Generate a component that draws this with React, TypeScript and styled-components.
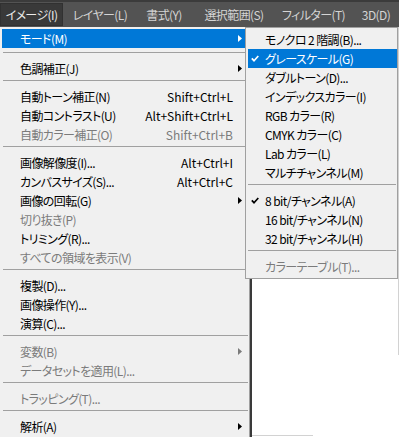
import React from 'react';
import styled, { createGlobalStyle, css } from 'styled-components';

const GlobalStyle = createGlobalStyle`
  html, body { margin: 0; padding: 0; background: #ffffff; }
  body { font-family: "Noto Sans CJK JP", "Noto Sans", sans-serif; }
`;

const FONT = `"Noto Sans CJK JP", "Noto Sans", sans-serif`;

const Screen = styled.div`
  width: 399px;
  height: 437px;
  overflow: hidden;
  display: flex;
  flex-direction: column;
  font-family: ${FONT};
  font-size: 12px;
  font-feature-settings: "palt";
`;

const MenuBar = styled.div`
  height: 27px;
  box-sizing: border-box;
  background: #535353;
  border-top: 2px solid #3b3b3b;
  padding-top: 1px;
  display: flex;
  gap: 4px;
  flex: none;
`;

const BarItem = styled.div<{ $active?: boolean; $w: number }>`
  width: ${(p) => p.$w}px;
  height: 23px;
  flex: none;
  display: flex;
  align-items: center;
  justify-content: center;
  color: #d4d4d4;
  white-space: nowrap;
  letter-spacing: -0.6px;
  ${(p) =>
    p.$active &&
    css`
      background: #393939;
      box-shadow: inset 0 0 0 1px #313131;
      color: #ececec;
    `}
`;

const Body = styled.div`
  flex: 1;
  min-height: 0;
  display: flex;
  position: relative;
`;

const Dropdown = styled.div`
  width: 250px;
  flex: none;
  box-sizing: border-box;
  background: #f0f0f0;
  border-right: 1px solid #a0a0a0;
  padding-top: 2px;
  display: flex;
  flex-direction: column;
`;

const SubMenu = styled.div`
  position: absolute;
  left: 245px;
  top: 0;
  width: 153px;
  box-sizing: border-box;
  background: #f0f0f0;
  border: 1px solid #a0a0a0;
  padding: 2px 0 2px 2px;
  display: flex;
  flex-direction: column;
`;

const Row = styled.div<{ $hl?: boolean; $disabled?: boolean; $inset: number }>`
  height: 19px;
  margin: 0 ${(p) => p.$inset}px;
  display: flex;
  align-items: center;
  white-space: nowrap;
  color: ${(p) => (p.$disabled ? '#7b7b7b' : '#000000')};
  ${(p) =>
    p.$hl &&
    css`
      background: #0078d7;
      color: #ffffff;
    `}
`;

const CheckCell = styled.div<{ $w: number }>`
  width: ${(p) => p.$w}px;
  flex: none;
  display: flex;
  align-items: center;
  padding-left: 3px;
  box-sizing: border-box;
`;

const Label = styled.span`
  flex: 1;
  letter-spacing: -0.6px;
`;

const Shortcut = styled.span`
  flex: none;
`;

const ArrowCell = styled.div`
  width: 14px;
  flex: none;
  display: flex;
  align-items: center;
  padding-left: 5px;
  box-sizing: border-box;
`;

const Sep = styled.div<{ $wide?: boolean; $sub?: boolean }>`
  height: 1px;
  flex: none;
  background: #a0a0a0;
  margin: ${(p) => (p.$wide ? 4 : 2)}px 1px 6px ${(p) => (p.$sub ? 0 : 3)}px;
`;

const DocFrame = styled.div`
  flex: 1;
  min-width: 0;
  background: #ffffff;
  border-left: 2px solid #3a3a3a;
  display: flex;
`;

const Canvas = styled.div`
  flex: 1;
  display: flex;
  flex-direction: column;
  justify-content: flex-end;
`;

const BottomRule = styled.div`
  width: 61px;
  height: 1px;
  margin-bottom: 1px;
  background: #d2d2d2;
`;

const EdgeColumn = styled.div`
  width: 1px;
  flex: none;
`;

const EdgeLine = styled.div`
  height: 328px;
  background: #d2d2d2;
`;

type ItemEntry = {
  kind: 'item';
  label: string;
  shortcut?: string;
  sub?: boolean;
  disabled?: boolean;
  hl?: boolean;
  checked?: boolean;
};
type Entry = ItemEntry | { kind: 'sep'; wide?: boolean };

const it = (label: string, o: Partial<Omit<ItemEntry, 'kind' | 'label'>> = {}): Entry => ({
  kind: 'item',
  label,
  ...o,
});
const sep = (wide = false): Entry => ({ kind: 'sep', wide });

const mainItems: Entry[] = [
  it('モード(M)', { sub: true, hl: true }),
  sep(true),
  it('色調補正(J)', { sub: true }),
  sep(),
  it('自動トーン補正(N)', { shortcut: 'Shift+Ctrl+L' }),
  it('自動コントラスト(U)', { shortcut: 'Alt+Shift+Ctrl+L' }),
  it('自動カラー補正(O)', { shortcut: 'Shift+Ctrl+B', disabled: true }),
  sep(),
  it('画像解像度(I)...', { shortcut: 'Alt+Ctrl+I' }),
  it('カンバスサイズ(S)...', { shortcut: 'Alt+Ctrl+C' }),
  it('画像の回転(G)', { sub: true }),
  it('切り抜き(P)', { disabled: true }),
  it('トリミング(R)...'),
  it('すべての領域を表示(V)', { disabled: true }),
  sep(),
  it('複製(D)...'),
  it('画像操作(Y)...'),
  it('演算(C)...'),
  sep(),
  it('変数(B)', { sub: true, disabled: true }),
  it('データセットを適用(L)...', { disabled: true }),
  sep(),
  it('トラッピング(T)...', { disabled: true }),
  sep(),
  it('解析(A)', { sub: true }),
];

const subItems: Entry[] = [
  it('モノクロ 2 階調(B)...'),
  it('グレースケール(G)', { hl: true, checked: true }),
  it('ダブルトーン(D)...'),
  it('インデックスカラー(I)'),
  it('RGB カラー(R)'),
  it('CMYK カラー(C)'),
  it('Lab カラー(L)'),
  it('マルチチャンネル(M)'),
  sep(),
  it('8 bit/チャンネル(A)', { checked: true }),
  it('16 bit/チャンネル(N)'),
  it('32 bit/チャンネル(H)'),
  sep(),
  it('カラーテーブル(T)...', { disabled: true }),
];

const barItems: { label: string; w: number }[] = [
  { label: 'イメージ(I)', w: 63 },
  { label: 'レイヤー(L)', w: 66 },
  { label: '書式(Y)', w: 54 },
  { label: '選択範囲(S)', w: 78 },
  { label: 'フィルター(T)', w: 73 },
  { label: '3D(D)', w: 44 },
];

const CheckIcon = () => (
  <svg width="8" height="7" viewBox="0 0 8 7">
    <path d="M0.8 3.4 L3 5.7 L7.3 1" fill="none" stroke="currentColor" strokeWidth="1.7" />
  </svg>
);

const ArrowIcon = () => (
  <svg width="4" height="7" viewBox="0 0 4 7">
    <path d="M0 0 L4 3.5 L0 7 Z" fill="currentColor" />
  </svg>
);

const MenuList: React.FC<{ items: Entry[]; sub?: boolean }> = ({ items, sub }) => (
  <>
    {items.map((e, i) =>
      e.kind === 'sep' ? (
        <Sep key={i} $wide={e.wide} $sub={sub} />
      ) : (
        <Row key={i} $hl={e.hl} $disabled={e.disabled} $inset={sub ? 0 : 2}>
          <CheckCell $w={sub ? 17 : 18}>{e.checked && <CheckIcon />}</CheckCell>
          <Label>{e.label}</Label>
          {e.shortcut && <Shortcut>{e.shortcut}</Shortcut>}
          {!sub && <ArrowCell>{e.sub && <ArrowIcon />}</ArrowCell>}
        </Row>
      )
    )}
  </>
);

export default function App() {
  return (
    <>
      <GlobalStyle />
      <Screen>
        <MenuBar>
          {barItems.map((b, i) => (
            <BarItem key={b.label} $active={i === 0} $w={b.w}>
              {b.label}
            </BarItem>
          ))}
        </MenuBar>
        <Body>
          <Dropdown>
            <MenuList items={mainItems} />
          </Dropdown>
          <DocFrame>
            <Canvas>
              <BottomRule />
            </Canvas>
            <EdgeColumn>
              <EdgeLine />
            </EdgeColumn>
          </DocFrame>
          <SubMenu>
            <MenuList items={subItems} sub />
          </SubMenu>
        </Body>
      </Screen>
    </>
  );
}
